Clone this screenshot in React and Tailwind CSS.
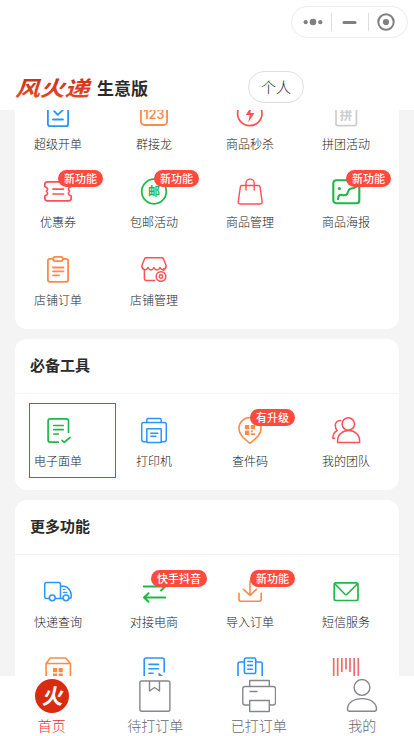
import React from 'react';

const BLUE = '#2b94ff';
const ORANGE = '#ff8a48';
const RED = '#ff5055';
const GREEN = '#1fb848';

function Icon({ color, width = 1.5, children }) {
  return (
    <svg
      viewBox="0 0 30 30"
      className="block h-[30px] w-[30px]"
      fill="none"
      stroke={color}
      strokeWidth={width}
      strokeLinecap="round"
      strokeLinejoin="round"
    >
      {children}
    </svg>
  );
}

function Glyph({ x = 15, y, size, color, className, children }) {
  return (
    <text
      x={x}
      y={y}
      fontSize={size}
      fill={color}
      stroke="none"
      textAnchor="middle"
      fontWeight="600"
      className={className}
    >
      {children}
    </text>
  );
}

const icons = {
  order: (
    <Icon color={BLUE} width={1.8}>
      <rect x="4.9" y="4" width="20.2" height="24.2" rx="2" />
      <path d="M11.2 13.2l3.5 3.7 5.3-5M10 21.5h10" />
    </Icon>
  ),
  chain: (
    <Icon color={ORANGE} width={1.8}>
      <rect x="1.9" y="3" width="26.2" height="24" rx="3.5" />
      <Glyph y={20.5} size={12.5} color={ORANGE} className="font-[Inter]">123</Glyph>
    </Icon>
  ),
  flash: (
    <Icon color={RED} width={1.7}>
      <circle cx="14.8" cy="15.5" r="12.2" />
      <path d="M16.3 8.5L10.8 17h3.9l-1.5 7.4 6.2-9.400h-4z" fill={RED} stroke="none" />
    </Icon>
  ),
  group: (
    <Icon color="#cdcdcd" width={1.7}>
      <rect x="5" y="4" width="20.4" height="23.6" rx="1.5" />
      <Glyph y={22} size={12.5} color="#cdcdcd">拼</Glyph>
    </Icon>
  ),
  coupon: (
    <Icon color={RED} width={1.7}>
      <path d="M4.5 5.8h21q2.7 0 2.7 2.500v2.200c-3.400 1.600-3.400 2.900-1.600 4.800-1.800 2-1.800 3.200 1.600 4.800v2.200q0 2.500-2.700 2.500h-21q-2.700 0-2.700-2.500v-2.200c3.400-1.600 3.400-2.800 1.600-4.800 1.800-1.900 1.800-3.200-1.600-4.800V8.300q0-2.500 2.700-2.500z" />
      <path d="M10 13.200h10.500M10 18h10.500" />
    </Icon>
  ),
  post: (
    <Icon color={GREEN} width={1.7}>
      <circle cx="15" cy="15.5" r="12.3" />
      <Glyph y={20} size={12} color={GREEN}>邮</Glyph>
    </Icon>
  ),
  bag: (
    <Icon color={RED} width={1.4}>
      <path d="M6.6 9.5h17q1.200 0 1.400 1.200l2.100 15q.3 2.300-1.900 2.300H5.200q-2.200 0-1.900-2.300l2.100-15q.2-1.200 1.200-1.200z" />
      <path d="M11 14V7.200a4.100 4.100 0 0 1 8.200 0V14" />
    </Icon>
  ),
  poster: (
    <Icon color={GREEN} width={2.1}>
      <rect x="2.300" y="4.200" width="26" height="23" rx="2.800" />
      <circle cx="8.400" cy="12.500" r="1.600" fill={GREEN} stroke="none" />
      <path d="M7 23.300c.2-3.500 1.600-5 3.800-4.400 2 .5 4 1 5.200-.8 1.400-2.200 1-4.500 3.300-5.400 2.300-.8 4.400-.3 6-1.900" />
    </Icon>
  ),
  clipboard: (
    <Icon color={ORANGE} width={1.8}>
      <path d="M10 4.900H6.800q-1.900 0-1.900 1.900v19q0 2 1.900 2h16.400q1.900 0 1.900-2v-19q0-1.900-1.900-1.900H20" />
      <rect x="10.300" y="2.900" width="9.400" height="4.200" rx="1.600" />
      <path d="M10 13.500h10.500M10 17.300h10.500M10 21.300h6" />
    </Icon>
  ),
  shop: (
    <Icon color={RED} width={1.5}>
      <path d="M7 3.700h16q1 0 1.400 1l2.600 6.500c.8 4.600-4.300 6-6 2.300-1.300 3.200-4.700 3.200-6 0-1.300 3.200-4.700 3.200-6 0-1.700 3.700-6.800 2.300-6-2.300l2.600-6.500q.4-1 1.400-1z" />
      <path d="M5.400 16v8.800q0 1.700 1.700 1.700h8.400M24.700 14.800v1.600" />
      <circle cx="22" cy="22.500" r="1.700" />
      <circle cx="22" cy="22.500" r="4.800" />
    </Icon>
  ),
  waybill: (
    <Icon color={GREEN} width={1.7}>
      <path d="M15.200 27.200H7.300q-2.200 0-2.200-2.200V6q0-2.200 2.200-2.200h16q2.200 0 2.200 2.200v11.500" />
      <path d="M10.800 10.500h9.500M10.800 14.600h9.500M10.800 19h4.500M19 25.300l2.200 2 5.800-4.800" />
    </Icon>
  ),
  printer: (
    <Icon color={BLUE} width={1.5}>
      <path d="M7.800 26.800H4.700q-2-.2-2-2.200V9.500q0-2 2-2h20.600q2 0 2 2v15.100q0 2-2 2.200h-3.100" />
      <path d="M7.800 7.500V5q0-1.500 1.500-1.500h11.400q1.500 0 1.500 1.500v2.500" />
      <rect x="7.800" y="13.800" width="14.400" height="13.700" rx=".6" />
      <path d="M11.800 18.200h7M11.800 21.300h5" />
    </Icon>
  ),
  pin: (
    <Icon color={ORANGE} width={1.6}>
      <path d="M15 28.300C9.500 24 3.900 19.500 3.900 13.600a11.100 11.100 0 0 1 22.200 0C26.100 19.500 20.500 24 15 28.300z" />
      <path
        d="M10 10h4.300v4.300H10zM15.800 10H20v4.300h-4.200zM10 15.600h4.300v4.300H10zM15.800 15.600h2v1.600h-2zM15.800 18.300H20v1.600h-4.200z"
        fill={ORANGE}
        stroke="none"
      />
    </Icon>
  ),
  team: (
    <Icon color={RED} width={1.5}>
      <circle cx="17.300" cy="9" r="6.200" />
      <path d="M6.600 27.500v-2.300c0-5 4.500-9.600 11-9.600s11 4.600 11 9.600v2.300z" />
      <path d="M9.800 5.500C6 5.300 4.200 7.800 4.300 10.500c0 2.200.6 3.600 1.900 5C3 17.200 1.800 19.500 1.800 23.300h1.800" />
    </Icon>
  ),
  truck: (
    <Icon color={BLUE} width={1.5}>
      <path d="M6 22.500H3.700q-2 0-2-2V8.600q0-2 2-2h11.800q2 0 2 2v13.900h-5M17.500 10.300h3.700c3.600 0 7 5 7 8.500v1.700q0 2-2 2M17.500 22.500h2.200" />
      <circle cx="9.300" cy="21.800" r="2.900" />
      <circle cx="23" cy="21.800" r="2.900" />
      <path d="M20.300 13.500h1.700M20.300 16.300h3.500" strokeWidth="1.2" />
    </Icon>
  ),
  swap: (
    <Icon color={GREEN} width={2}>
      <path d="M4.800 10.500h21.400L22 14.500M26.200 21.500H5l4.500-4.200M5 21.500l4.500 4.200" />
    </Icon>
  ),
  download: (
    <Icon color={ORANGE} width={1.6}>
      <path d="M4 17.300v6q0 2 2 2h18.200q2 0 2-2v-6M15 5v14M8.600 13.300l6.400 6 6.400-6" />
    </Icon>
  ),
  mail: (
    <Icon color={GREEN} width={1.7}>
      <rect x="3.200" y="6.800" width="23.800" height="17.700" rx="1.800" />
      <path d="M4 8l9.700 10q1.300 1.200 2.600 0L26.200 8" />
    </Icon>
  ),
  house: (
    <Icon color={ORANGE} width={1.6}>
      <path d="M3.100 28V9.500L7.300 4h15.400l4.700 5.500V28M3.100 9.500h24.300" />
      <path
        d="M10 14h4.200v4.200H10zM15.600 14h4.200v4.200h-4.200zM10 19.500h4.200v4.200H10zM15.600 19.500h4.200v4.200h-4.200z"
        fill={ORANGE}
        stroke="none"
      />
    </Icon>
  ),
  doc: (
    <Icon color={BLUE} width={1.6}>
      <path d="M13 27H7.200q-2 0-2-2V6q0-2 2-2h16q2 0 2 2v12" />
      <path d="M10 10.400h9.500M10 14.800h9.500M10 19.200h4" />
      <path d="M19.500 18.500l6 4.500h-6z" fill={BLUE} stroke="none" />
    </Icon>
  ),
  scan: (
    <Icon color={BLUE} width={1.6}>
      <rect x="9.400" y="4" width="11.300" height="15.500" rx="1.500" />
      <path d="M9.400 8H5Q3 8 3 10v18M20.700 8h4.500q2 0 2 2v18M12.800 7.500h4.500M12.800 11.400h4.500M12.800 15.200h4.500" />
    </Icon>
  ),
  barcode: (
    <Icon color="#f26b6d" width={1.7}>
      <path
        d="M2.700 4v24M6.700 4v24M10.800 4v14M15 4v11.500M19 4v14M23.200 4v24M27.300 4v24"
        strokeLinecap="butt"
      />
    </Icon>
  ),
};

const shopItems = [
  { label: '超级开单', icon: 'order' },
  { label: '群接龙', icon: 'chain' },
  { label: '商品秒杀', icon: 'flash' },
  { label: '拼团活动', icon: 'group' },
  { label: '优惠券', icon: 'coupon', badge: '新功能' },
  { label: '包邮活动', icon: 'post', badge: '新功能' },
  { label: '商品管理', icon: 'bag' },
  { label: '商品海报', icon: 'poster', badge: '新功能' },
  { label: '店铺订单', icon: 'clipboard' },
  { label: '店铺管理', icon: 'shop' },
];

const toolItems = [
  { label: '电子面单', icon: 'waybill', active: true },
  { label: '打印机', icon: 'printer' },
  { label: '查件码', icon: 'pin', badge: '有升级' },
  { label: '我的团队', icon: 'team' },
];

const moreItems = [
  { label: '快递查询', icon: 'truck' },
  { label: '对接电商', icon: 'swap', badge: '快手抖音', wide: true },
  { label: '导入订单', icon: 'download', badge: '新功能' },
  { label: '短信服务', icon: 'mail' },
  { icon: 'house' },
  { icon: 'doc' },
  { icon: 'scan' },
  { icon: 'barcode' },
];

function Cell({ item }) {
  return (
    <div className="relative flex h-[55px] flex-col items-center">
      {icons[item.icon]}
      <span className="mt-[7px] text-xs leading-[18px] font-light whitespace-nowrap text-[#222]">{item.label}</span>
      {item.badge && (
        <span
          className={`absolute -top-1.5 h-[17px] rounded-full bg-[#ff4a3d] px-1.5 text-[11px] leading-[17px] font-medium whitespace-nowrap text-white ${
            item.wide ? 'left-[45px]' : 'left-12'
          }`}
        >
          {item.badge}
        </span>
      )}
      {item.active && <div className="absolute -top-3 left-[19px] h-[75px] w-[87px] border border-[#f23030]" />}
    </div>
  );
}

function Grid({ items }) {
  return (
    <div className="-ml-[5px] grid w-96 grid-cols-4 gap-y-[23px]">
      {items.map((item) => (
        <Cell key={item.icon} item={item} />
      ))}
    </div>
  );
}

function Section({ title, items }) {
  return (
    <section className="mt-2.5 rounded-xl bg-white pb-5">
      <h2 className="h-[55px] border-b border-[#f2f2f2] pl-[15px] text-[15px] leading-[52px] font-bold text-[#2b2b2b]">
        {title}
      </h2>
      <div className="pt-[21px]">
        <Grid items={items} />
      </div>
    </section>
  );
}

function Capsule() {
  return (
    <div className="mt-1.5 mr-1.5 ml-auto flex h-8 w-[117px] items-center rounded-full border border-[#ededed]">
      <svg viewBox="0 0 115 30" className="h-[30px] w-[115px]" fill="#808080">
        <circle cx="13.7" cy="15.200" r="2.100" />
        <circle cx="21" cy="15" r="3.300" />
        <circle cx="28.300" cy="15.200" r="2.100" />
        <rect x="39" y="6" width="1" height="18" fill="#dedede" />
        <rect x="50.500" y="14" width="14" height="3" rx="1.500" />
        <rect x="76" y="6" width="1" height="18" fill="#dedede" />
        <circle cx="94" cy="15" r="7.700" fill="none" stroke="#808080" strokeWidth="2" />
        <circle cx="94" cy="15" r="3.100" />
      </svg>
    </div>
  );
}

function TabIcon({ children }) {
  return (
    <svg
      viewBox="0 0 34 34"
      className="block h-[34px] w-[34px]"
      fill="none"
      stroke="#85878b"
      strokeWidth="1.4"
      strokeLinejoin="round"
    >
      {children}
    </svg>
  );
}

const tabs = [
  {
    label: '首页',
    active: true,
    icon: (
      <TabIcon>
        <circle cx="17" cy="17" r="17" fill="#d92b10" stroke="none" />
        <g transform="translate(17.3 24.6) skewX(-10)">
          <Glyph x={0} y={0} size={21} color="#fff">火</Glyph>
        </g>
      </TabIcon>
    ),
  },
  {
    label: '待打订单',
    icon: (
      <TabIcon>
        <rect x="1.900" y="2" width="30" height="30.300" rx="1.800" />
        <path d="M11.500 2v10l5-3.500 5 3.500V2" />
      </TabIcon>
    ),
  },
  {
    label: '已打订单',
    icon: (
      <TabIcon>
        <path d="M7.700 26H3q-2.200 0-2.200-2.200V9.700Q.8 7.500 3 7.500h28.300q2.200 0 2.200 2.200v14.100q0 2.200-2.200 2.200h-4M7.700 7.500V1.500h19.600v6" />
        <path d="M7.700 21.500h19.600v11H7.700zM7.500 12.500h8" />
      </TabIcon>
    ),
  },
  {
    label: '我的',
    icon: (
      <TabIcon>
        <circle cx="17" cy="8.500" r="7.900" />
        <path d="M4.500 32.300q-2-.2-2-2.300c0-6 6-10.400 14.500-10.400S31.500 24 31.500 30q0 2.100-2 2.300z" />
      </TabIcon>
    ),
  },
];

export default function App() {
  return (
    <div className="flex h-[736px] w-[414px] flex-col overflow-hidden bg-[#f4f4f4] font-['Noto_Sans_CJK_SC',sans-serif]">
      <header className="flex h-[110px] shrink-0 flex-col bg-white">
        <Capsule />
        <div className="mt-[33px] flex h-8 items-center pl-[15px]">
          <svg viewBox="0 0 78 32" className="h-8 w-[78px]">
            <defs>
              <linearGradient id="brand" x1="0" y1="0" x2="0" y2="1">
                <stop offset="0" stopColor="#cf2410" />
                <stop offset="1" stopColor="#e5502c" />
              </linearGradient>
            </defs>
            <g transform="translate(0 24.8) skewX(-18) scale(1.1 .92)">
              <text x="0" y="0" fontSize="22.5" fontWeight="600" fill="url(#brand)">
                风火递
              </text>
            </g>
          </svg>
          <span className="ml-1 text-[17px] leading-none font-bold text-[#2b2b2b]">生意版</span>
          <span className="ml-[100px] flex h-8 w-14 items-center justify-center rounded-full border border-[#dedede] text-[15px] font-light text-[#222]">
            个人
          </span>
        </div>
      </header>

      <main className="h-[566px] shrink-0 overflow-hidden px-[15px]">
        <section className="-mt-3 rounded-b-xl bg-white pb-5">
          <Grid items={shopItems} />
        </section>
        <Section title="必备工具" items={toolItems} />
        <Section title="更多功能" items={moreItems} />
      </main>

      <nav className="grid h-[60px] shrink-0 grid-cols-4 bg-white pt-[3px]">
        {tabs.map((tab) => (
          <div key={tab.label} className="flex flex-col items-center">
            {tab.icon}
            <span
              className={`mt-0.5 text-sm leading-5 font-light ${tab.active ? 'text-[#f8282e]' : 'text-[#66686c]'}`}
            >
              {tab.label}
            </span>
          </div>
        ))}
      </nav>
    </div>
  );
}
